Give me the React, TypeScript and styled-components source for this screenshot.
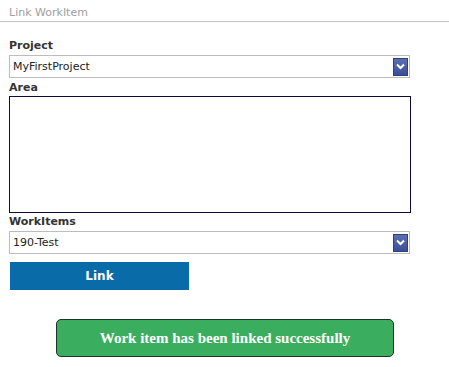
import React from 'react';
import styled, { createGlobalStyle } from 'styled-components';

const GlobalStyle = createGlobalStyle`
  html, body {
    margin: 0;
    padding: 0;
    background: #ffffff;
  }
  body {
    font-family: 'DejaVu Sans', Verdana, sans-serif;
  }
`;

const Page = styled.div`
  width: 449px;
  height: 367px;
  background: #ffffff;
  display: flex;
  flex-direction: column;
`;

const Header = styled.div`
  height: 22px;
  border-bottom: 1px solid #c4c4c4;
  padding: 6px 0 0 9px;
  box-sizing: border-box;
  font-size: 11px;
  line-height: 13px;
  color: #a0a0a0;
`;

const Form = styled.div`
  display: flex;
  flex-direction: column;
  padding: 17px 0 0 9px;
  width: 402px;
`;

const Label = styled.div<{ $top?: number }>`
  font-size: 11px;
  line-height: 14px;
  font-weight: bold;
  color: #333333;
  margin-top: ${({ $top }) => $top || 0}px;
`;

const Select = styled.div`
  width: 401px;
  height: 23px;
  margin-top: 2px;
  box-sizing: border-box;
  border: 1px solid #bcbcbc;
  display: flex;
  align-items: center;
  justify-content: space-between;
  padding: 0 1px 0 3px;
  font-size: 11px;
  color: #222222;
`;

const Arrow = styled.div`
  width: 15px;
  height: 18px;
  box-sizing: border-box;
  background: linear-gradient(#5a6fb6, #3c4f99);
  border: 1px solid #2f3f7f;
  display: flex;
  align-items: center;
  justify-content: center;
`;

const Area = styled.div`
  width: 402px;
  height: 117px;
  margin-top: 1px;
  box-sizing: border-box;
  border: 1px solid #0c0c3c;
`;

const LinkButton = styled.div`
  width: 179px;
  height: 28px;
  margin: 8px 0 0 1px;
  background: #096ba8;
  color: #ffffff;
  font-size: 12px;
  font-weight: bold;
  display: flex;
  align-items: center;
  justify-content: center;
`;

const Message = styled.div`
  width: 338px;
  height: 38px;
  box-sizing: border-box;
  margin: 29px 0 0 56px;
  background: #3aae5e;
  border: 1px solid #1c3328;
  border-radius: 5px;
  color: #ffffff;
  font-family: 'Liberation Serif', 'Times New Roman', serif;
  font-weight: bold;
  font-size: 15px;
  display: flex;
  align-items: center;
  justify-content: center;
`;

const ArrowIcon = () => (
  <Arrow>
    <svg width="9" height="7" viewBox="0 0 9 7">
      <path d="M1 1.5 L4.5 5 L8 1.5" stroke="#ffffff" strokeWidth="2" fill="none" />
    </svg>
  </Arrow>
);

const App = () => (
  <>
    <GlobalStyle />
    <Page>
      <Header>Link WorkItem</Header>
      <Form>
        <Label>Project</Label>
        <Select>
          <span>MyFirstProject</span>
          <ArrowIcon />
        </Select>
        <Label $top={3}>Area</Label>
        <Area />
        <Label $top={2}>WorkItems</Label>
        <Select>
          <span>190-Test</span>
          <ArrowIcon />
        </Select>
        <LinkButton>Link</LinkButton>
      </Form>
      <Message>Work item has been linked successfully</Message>
    </Page>
  </>
);

export default App;
